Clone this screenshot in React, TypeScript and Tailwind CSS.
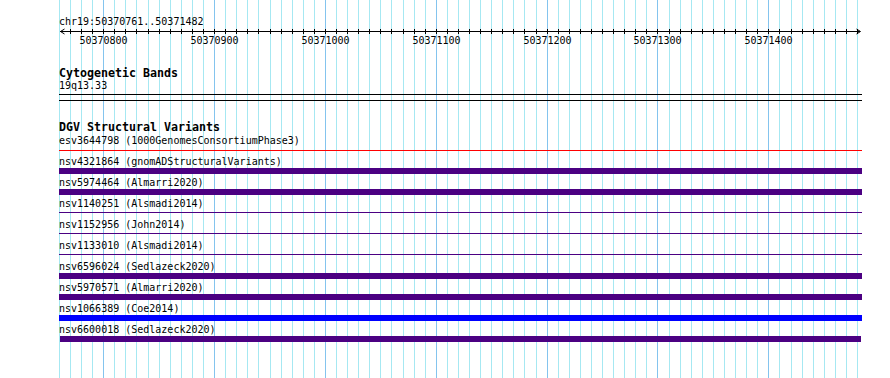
import React from "react";

const BP0 = 50370761;
const px = (bp: number) => Math.round(60 + (bp - BP0) * 1.1085);
const gridBps: number[] = [];
for (let b = 50370760; b <= 50371480; b += 10) gridBps.push(b);
const majors = [50370800, 50370900, 50371000, 50371100, 50371200, 50371300, 50371400];

type Row = { label: string; kind: "red" | "thin" | "bar" | "blue"; last?: boolean };
const rows: Row[] = [
  { label: "esv3644798 (1000GenomesConsortiumPhase3)", kind: "red" },
  { label: "nsv4321864 (gnomADStructuralVariants)", kind: "bar" },
  { label: "nsv5974464 (Almarri2020)", kind: "bar" },
  { label: "nsv1140251 (Alsmadi2014)", kind: "thin" },
  { label: "nsv1152956 (John2014)", kind: "thin" },
  { label: "nsv1133010 (Alsmadi2014)", kind: "thin" },
  { label: "nsv6596024 (Sedlazeck2020)", kind: "bar" },
  { label: "nsv5970571 (Almarri2020)", kind: "bar" },
  { label: "nsv1066389 (Coe2014)", kind: "blue" },
  { label: "nsv6600018 (Sedlazeck2020)", kind: "bar", last: true },
];

function Feature({ row }: { row: Row }) {
  if (row.kind === "red") return <div className="mt-[3px] h-px w-[803px] bg-[#ff0000]" />;
  if (row.kind === "thin") return <div className="mt-[2px] h-px w-[803px] bg-[#4b0082]" />;
  if (row.kind === "blue") return <div className="h-[6px] w-[803px] bg-[#0000ff]" />;
  if (row.last) return <div className="ml-px h-[6px] w-[801px] bg-[#4b0082]" />;
  return <div className="h-[6px] w-[803px] bg-[#4b0082]" />;
}

export default function App() {
  return (
    <div className="relative w-[890px] h-[378px] overflow-hidden bg-white font-['DejaVu_Sans_Mono',monospace] text-black">
      <svg className="absolute inset-0" width={890} height={378} shapeRendering="crispEdges">
        {gridBps.map((b) => (
          <rect
            key={b}
            x={px(b)}
            y={0}
            width={1}
            height={378}
            fill={b % 100 === 0 ? "#84c4ee" : "#a6e8f2"}
          />
        ))}
      </svg>
      <div className="relative flex flex-col pl-[59px] pt-[17px]">
        <div className="h-[11px] text-[10px] leading-[9px] whitespace-pre">chr19:50370761..50371482</div>
        <svg width={803} height={17} className="block overflow-visible">
          <rect x={1} y={3} width={800} height={1} fill="#000" shapeRendering="crispEdges" />
          <path d="M5.5 1 L1.5 3.5 L5.5 6" stroke="#000" strokeWidth={1} fill="none" />
          <path d="M797.5 1 L801.5 3.5 L797.5 6" stroke="#000" strokeWidth={1} fill="none" />
          {gridBps
            .filter((b) => b > 50370760)
            .map((b) => (
              <rect key={b} x={px(b) - 59} y={1} width={1} height={5} fill="#000" shapeRendering="crispEdges" />
            ))}
          {majors.map((b) => (
            <text
              key={b}
              x={px(b) - 59 + 0.5}
              y={16}
              textAnchor="middle"
              fontSize={10}
              style={{ fontFamily: "'DejaVu Sans Mono', monospace" }}
              fill="#000"
            >
              {b}
            </text>
          ))}
        </svg>
        <div className="mt-[22px] h-[13px] text-[11.63px] font-bold leading-[12px] whitespace-pre">Cytogenetic Bands</div>
        <div className="h-[13px] text-[10px] leading-[11px] whitespace-pre">19q13.33</div>
        <div className="mt-px h-[7px] w-[803px] border-y border-black" />
        <div className="mt-[20px] h-[13px] text-[11.63px] font-bold leading-[12px] whitespace-pre">DGV Structural Variants</div>
        <div className="mt-px flex flex-col">
          {rows.map((r) => (
            <div key={r.label} className="flex h-[21px] flex-col">
              <div className="h-[12px] text-[10px] leading-[11px] whitespace-pre">{r.label}</div>
              <div className="h-[9px]">
                <Feature row={r} />
              </div>
            </div>
          ))}
        </div>
      </div>
    </div>
  );
}
